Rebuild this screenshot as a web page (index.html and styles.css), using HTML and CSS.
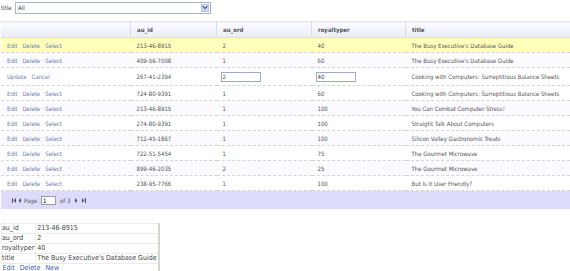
FILE: index.html
```html
<!DOCTYPE html>
<html>
<head>
    <title>Authors</title>
    <link rel="stylesheet" href="styles.css">
</head>
<body>
    <div class="filter">
        <label for="titleFilter">title</label>
        <div class="combo">
            <span class="combo-text">All</span>
            <span class="combo-btn">
                <svg width="6" height="5" viewBox="0 0 6 5"><path d="M0.5 1 L3 3.5 L5.5 1" fill="none" stroke="#4a5a8a" stroke-width="1.2"/></svg>
            </span>
        </div>
    </div>

    <table class="grid">
        <tr class="head">
            <th class="c1"></th>
            <th class="c2">au_id</th>
            <th class="c3">au_ord</th>
            <th class="c4">royaltyper</th>
            <th class="c5">title</th>
        </tr>
        <tr class="selected">
            <td><a>Edit</a><a>Delete</a><a>Select</a></td>
            <td>213-46-8915</td><td>2</td><td>40</td><td>The Busy Executive's Database Guide</td>
        </tr>
        <tr class="alt">
            <td><a>Edit</a><a>Delete</a><a>Select</a></td>
            <td>409-56-7008</td><td>1</td><td>60</td><td>The Busy Executive's Database Guide</td>
        </tr>
        <tr class="editing">
            <td><a>Update</a><a>Cancel</a></td>
            <td>267-41-2394</td>
            <td><input class="cell-input" type="text" value="2"></td>
            <td><input class="cell-input" type="text" value="40"></td>
            <td>Cooking with Computers: Surreptitious Balance Sheets</td>
        </tr>
        <tr>
            <td><a>Edit</a><a>Delete</a><a>Select</a></td>
            <td>724-80-9391</td><td>1</td><td>60</td><td>Cooking with Computers: Surreptitious Balance Sheets</td>
        </tr>
        <tr class="alt">
            <td><a>Edit</a><a>Delete</a><a>Select</a></td>
            <td>213-46-8915</td><td>1</td><td>100</td><td>You Can Combat Computer Stress!</td>
        </tr>
        <tr>
            <td><a>Edit</a><a>Delete</a><a>Select</a></td>
            <td>274-80-9391</td><td>1</td><td>100</td><td>Straight Talk About Computers</td>
        </tr>
        <tr class="alt">
            <td><a>Edit</a><a>Delete</a><a>Select</a></td>
            <td>712-45-1867</td><td>1</td><td>100</td><td>Silicon Valley Gastronomic Treats</td>
        </tr>
        <tr>
            <td><a>Edit</a><a>Delete</a><a>Select</a></td>
            <td>722-51-5454</td><td>1</td><td>75</td><td>The Gourmet Microwave</td>
        </tr>
        <tr class="alt">
            <td><a>Edit</a><a>Delete</a><a>Select</a></td>
            <td>899-46-2035</td><td>2</td><td>25</td><td>The Gourmet Microwave</td>
        </tr>
        <tr>
            <td><a>Edit</a><a>Delete</a><a>Select</a></td>
            <td>238-95-7766</td><td>1</td><td>100</td><td>But Is It User Friendly?</td>
        </tr>
        <tr class="pager">
            <td colspan="5">
                <div class="pager-bar">
                    <svg class="pg-icon" width="4" height="5" viewBox="0 0 4 5"><rect x="0" y="0" width="1" height="5" fill="#556"/><path d="M4 0 L1.5 2.5 L4 5 Z" fill="#556"/></svg>
                    <svg class="pg-icon" width="3" height="5" viewBox="0 0 3 5"><path d="M3 0 L0.5 2.5 L3 5 Z" fill="#556"/></svg>
                    <span class="pg-text">Page</span>
                    <input class="pg-input" type="text" value="1">
                    <span class="pg-text pg-of">of 3</span>
                    <svg class="pg-icon pg-next" width="3" height="5" viewBox="0 0 3 5"><path d="M0 0 L2.5 2.5 L0 5 Z" fill="#556"/></svg>
                    <svg class="pg-icon" width="4" height="5" viewBox="0 0 4 5"><path d="M0 0 L2.5 2.5 L0 5 Z" fill="#556"/><rect x="3" y="0" width="1" height="5" fill="#556"/></svg>
                </div>
            </td>
        </tr>
    </table>

    <table class="detail">
        <tr><td class="lbl">au_id</td><td>213-46-8915</td></tr>
        <tr><td class="lbl">au_ord</td><td>2</td></tr>
        <tr><td class="lbl">royaltyper</td><td>40</td></tr>
        <tr><td class="lbl">title</td><td>The Busy Executive's Database Guide</td></tr>
        <tr><td colspan="2" class="links"><a>Edit</a><a>Delete</a><a>New</a></td></tr>
    </table>
</body>
</html>
```

FILE: styles.css
```css
body {
    margin: 0;
    padding: 0;
    font-family: "DejaVu Sans Condensed", "DejaVu Sans", sans-serif;
    font-size: 6px;
    color: #555;
    background: #fff;
}

/* filter row */
.filter {
    display: flex;
    align-items: center;
    height: 13px;
    padding: 1px 0 0 1px;
}
.filter label {
    width: 14px;
    color: #444;
}
.combo {
    display: flex;
    align-items: center;
    width: 194px;
    height: 10px;
    border: 1px solid #a8b4c8;
    background: #fff;
}
.combo-text {
    flex: 1;
    padding-left: 2px;
    color: #333;
}
.combo-btn {
    display: flex;
    align-items: center;
    justify-content: center;
    width: 8px;
    height: 8px;
    margin-right: 1px;
    background: linear-gradient(#e4ecfa, #c4d2ee);
    border: 1px solid #b8c6e2;
    box-sizing: border-box;
}

/* grid */
.grid {
    border-collapse: collapse;
    margin: 7px 0 0 1px;
    width: 569px;
    table-layout: fixed;
}
.grid .c1 { width: 123px; }
.grid .c2 { width: 79px; }
.grid .c3 { width: 88px; }
.grid .c4 { width: 87px; }
.grid .c5 { width: auto; }

.grid th {
    height: 15px;
    text-align: left;
    font-weight: bold;
    color: #555;
    padding: 0 0 0 6px;
    background: linear-gradient(#fbfbff, #ececfa);
    border-top: 1px solid #e4e4f6;
    border-left: 1px solid #dcdcf4;
    border-bottom: 1px solid #dcdcf2;
}
.grid th.c1 { border-left: none; }
.grid td {
    height: 14px;
    padding: 0 0 0 6px;
    border-bottom: 1px dashed #d4d4d4;
    white-space: nowrap;
    overflow: hidden;
}
.grid tr.alt td {
    background: #fafaff;
}
.grid tr.selected td {
    background: #ffffbe;
}
.grid tr.editing td {
    height: 17px;
}
.grid a {
    color: #6c7aae;
    margin-right: 5px;
}
.cell-input {
    width: 40px;
    height: 10px;
    box-sizing: border-box;
    border: 1px solid #9aaac8;
    font: inherit;
    font-size: 6px;
    color: #444;
    padding: 0 1px;
    margin-left: -2px;
}

.grid tr.pager td {
    height: 18px;
    background: #dcdcfa;
    border-bottom: none;
    padding: 0;
}
.pager-bar {
    display: flex;
    align-items: center;
    padding-left: 11px;
}
.pg-icon {
    margin-right: 2px;
}
.pg-next {
    margin-right: 4px;
}
.pg-text {
    color: #556;
    margin: 0 4px 0 1px;
}
.pg-of {
    margin: 0 5px 0 2px;
}
.pg-input {
    width: 15px;
    height: 9px;
    box-sizing: border-box;
    border: 1px solid #99a;
    font: inherit;
    font-size: 6px;
    padding: 0 1px;
    margin-right: 2px;
}

/* detail view */
.detail {
    border-collapse: collapse;
    margin: 14px 0 0 1px;
    font-size: 7px;
    color: #444;
    border-right: 2px solid #d6d6cc;
}
.detail td {
    height: 9px;
    padding: 0 1px;
    border: 1px solid #ececec;
    white-space: nowrap;
    line-height: 9px;
}
.detail td.lbl {
    width: 30px;
    padding-left: 0;
}
.detail td.links {
    border: none;
}
.detail a {
    color: #3a62b8;
    margin-right: 5px;
}
```
